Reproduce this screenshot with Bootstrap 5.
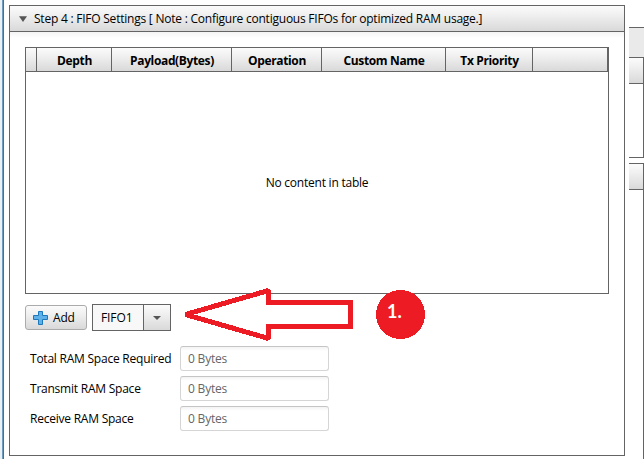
<!DOCTYPE html>
<html lang="en">
<head>
<meta charset="utf-8">
<title>FIFO Settings</title>
<link href="https://cdn.jsdelivr.net/npm/bootstrap@5.3.0/dist/css/bootstrap.min.css" rel="stylesheet">
<style>
:root{--line:#646464;--grad:linear-gradient(#fbfbfb,#f0f0f0 35%,#d9d9d9)}
body{width:644px;height:459px;overflow:hidden;background:#fff;color:#000;font:12px/16px "Open Sans","Noto Sans",sans-serif;letter-spacing:-.23px}
.edge{width:4px;background:linear-gradient(90deg,#e9f1f7 2px,#6f9dbd 2px,#6f9dbd 3px,#5f6b73 3px)}
.panel{width:616px;height:451px;margin:5px 0 0 5px;border:1px solid var(--line)}
.panel-title{height:26px;background:var(--grad);border-bottom:1px solid var(--line);padding-left:9px;gap:7px}
.panel-body{height:423px;padding:15px;background:linear-gradient(#f4f4f4,#fff 6px)}
.fifo-table{width:584px;height:247px;border:1px solid var(--line);background:#fff}
.heads{height:24px;background:var(--grad);border-bottom:1px solid var(--line);font-weight:700;letter-spacing:-.36px}
.heads>div{border-right:1px solid var(--line);line-height:25px;text-align:center;white-space:nowrap;padding-left:1px}
.c0{width:11px}.c1{width:75px}.c2{width:120px}.c3{width:90px}.c4{width:124px}.c5{width:87px}.c6{width:75px}
.empty{height:221px}
.actions{margin-top:10px;height:27px;gap:5px}
.add{width:62px;height:25px;margin-top:1px;padding:0 0 0 7px;border:1px solid #ababab;border-radius:3px;background:var(--grad);font-size:12px;line-height:16px;color:#000;gap:4px;letter-spacing:-.2px}
.combo{width:79px;height:27px;border:1px solid var(--line);background:#f8f8f8;letter-spacing:-.1px}
.combo-text{width:50px;padding-left:8px}
.combo-arrow{width:27px;border-left:1px solid var(--line);background:var(--grad)}
.fields{margin:15px 0 0 5px;gap:5px}
.fields label{width:150px;white-space:nowrap}
.ram{width:149px;height:25px;padding:0 7px;border:1px solid #d5d5d5;border-top-color:#c5c5c5;border-radius:3px;background:linear-gradient(#f3f3f3,#fff 4px);font-size:12px;line-height:16px;color:#666;letter-spacing:-.2px}
.side{width:15px;margin:27px 0 0 4px}
.strip{height:30px;background:#eaeaea;border-top:1px solid var(--line)}
.side-box{border:1px solid var(--line);border-left:0}
.upper{height:101px}
.lower{height:300px;margin-top:5px}
.side-head{height:26px;background:var(--grad);border-bottom:1px solid var(--line)}
.note{left:180px;top:284px}
.num{left:387px;top:302px;color:#fff;font:700 18px/18px Lato,sans-serif;letter-spacing:0}
</style>
</head>
<body class="position-relative">
<div class="d-flex h-100">
  <div class="edge flex-shrink-0"></div>
  <main class="panel flex-shrink-0">
    <div class="panel-title d-flex align-items-center">
      <svg width="8" height="6"><path d="M0 .3h8L4 6z" fill="#555"/></svg>
      <span class="text-nowrap">Step 4 : FIFO Settings [ Note : Configure contiguous FIFOs for optimized RAM usage.]</span>
    </div>
    <div class="panel-body">
      <div class="fifo-table">
        <div class="heads d-flex">
          <div class="c0"></div><div class="c1">Depth</div><div class="c2">Payload(Bytes)</div><div class="c3">Operation</div><div class="c4">Custom Name</div><div class="c5">Tx Priority</div><div class="c6"></div>
        </div>
        <div class="empty d-flex align-items-center justify-content-center"><span>No content in table</span></div>
      </div>
      <div class="actions d-flex">
        <button class="btn add d-flex align-items-center" type="button">
          <svg width="16" height="16"><path d="M5.500 1.500h4v4h5v4h-5v5h-4v-5h-5v-4h5z" fill="#5db1e8" stroke="#1c78bb"/></svg>
          <span>Add</span>
        </button>
        <div class="combo d-flex">
          <div class="combo-text d-flex align-items-center"><span>FIFO1</span></div>
          <div class="combo-arrow d-flex align-items-center justify-content-center"><svg width="8" height="4"><path d="M0 0h8L4 4z" fill="#555"/></svg></div>
        </div>
      </div>
      <div class="fields d-flex flex-column">
        <div class="d-flex align-items-center"><label for="total">Total RAM Space Required</label><input id="total" class="form-control ram" value="0 Bytes" readonly></div>
        <div class="d-flex align-items-center"><label for="tx">Transmit RAM Space</label><input id="tx" class="form-control ram" value="0 Bytes" readonly></div>
        <div class="d-flex align-items-center"><label for="rx">Receive RAM Space</label><input id="rx" class="form-control ram" value="0 Bytes" readonly></div>
      </div>
    </div>
  </main>
  <aside class="side flex-shrink-0">
    <div class="strip"></div>
    <div class="side-box upper"><div class="side-head"></div></div>
    <div class="side-box lower"><div class="side-head"></div></div>
  </aside>
</div>
<svg class="note position-absolute" width="250" height="60" shape-rendering="crispEdges"><path d="M5.500 30.500 88.500 6.500V18.500H170.500V42.500H88.500V54.500z" fill="#fff" stroke="#ed1c24" stroke-width="5" stroke-miterlimit="1.5"/><circle cx="220.500" cy="30.500" r="24.500" fill="#ed1c24"/></svg>
<span class="num position-absolute">1.</span>
<script src="https://cdn.jsdelivr.net/npm/bootstrap@5.3.0/dist/js/bootstrap.bundle.min.js"></script>
</body>
</html>
